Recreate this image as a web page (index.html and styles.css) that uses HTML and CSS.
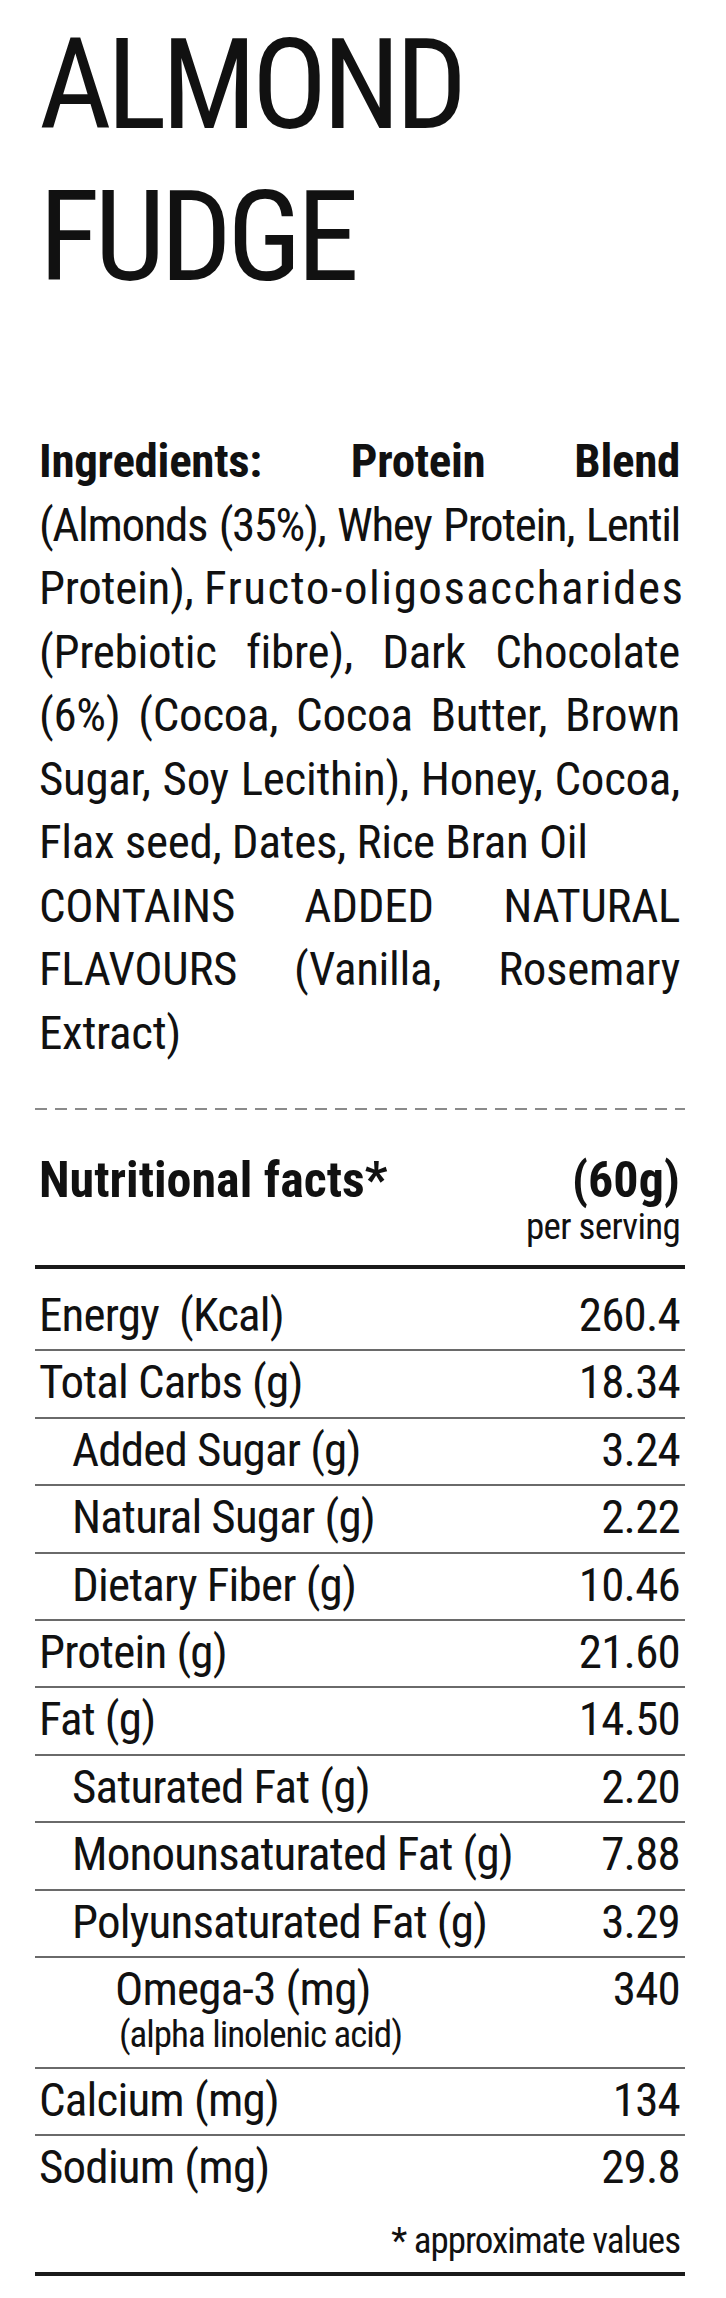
FILE: index.html
```html
<!DOCTYPE html>
<html lang="en">
<head>
<meta charset="utf-8">
<title>Almond Fudge – Nutrition Label</title>
<link rel="stylesheet" href="styles.css">
</head>
<body>
<main class="label">
  <h1 class="title">ALMOND<br>FUDGE</h1>

  <section class="ingredients">
    <span class="line bold">Ingredients: Protein Blend</span>
    <span class="line tight">(Almonds (35%), Whey Protein, Lentil</span>
    <span class="line">Protein), <span class="spread">Fructo-oligosaccharides</span></span>
    <span class="line">(Prebiotic fibre), Dark Chocolate</span>
    <span class="line">(6%) (Cocoa, Cocoa Butter, Brown</span>
    <span class="line">Sugar, Soy Lecithin), Honey, Cocoa,</span>
    <span class="line end">Flax seed, Dates, Rice Bran Oil</span>
    <span class="line">CONTAINS ADDED NATURAL</span>
    <span class="line">FLAVOURS (Vanilla, Rosemary</span>
    <span class="line end">Extract)</span>
  </section>

  <div class="dash" role="separator"></div>

  <header class="facts-head">
    <h2 class="facts-title">Nutritional facts*</h2>
    <div class="serving">
      <span class="serving-size">(60g)</span>
      <span class="serving-unit">per serving</span>
    </div>
  </header>

  <div class="facts">
    <div class="row first"><span class="name">Energy&nbsp; (Kcal)</span><span class="val">260.4</span></div>
    <div class="row"><span class="name">Total Carbs (g)</span><span class="val">18.34</span></div>
    <div class="row sub"><span class="name">Added Sugar (g)</span><span class="val">3.24</span></div>
    <div class="row sub"><span class="name">Natural Sugar (g)</span><span class="val">2.22</span></div>
    <div class="row sub"><span class="name">Dietary Fiber (g)</span><span class="val">10.46</span></div>
    <div class="row"><span class="name">Protein (g)</span><span class="val">21.60</span></div>
    <div class="row"><span class="name">Fat (g)</span><span class="val">14.50</span></div>
    <div class="row sub"><span class="name">Saturated Fat (g)</span><span class="val">2.20</span></div>
    <div class="row sub"><span class="name">Monounsaturated Fat (g)</span><span class="val">7.88</span></div>
    <div class="row sub"><span class="name">Polyunsaturated Fat (g)</span><span class="val">3.29</span></div>
    <div class="row subsub">
      <span class="name">Omega-3 (mg)<span class="note-sub">(alpha linolenic acid)</span></span>
      <span class="val">340</span>
    </div>
    <div class="row"><span class="name">Calcium (mg)</span><span class="val">134</span></div>
    <div class="row last"><span class="name">Sodium (mg)</span><span class="val">29.8</span></div>
  </div>

  <p class="footnote">* approximate values</p>
  <div class="thick-rule" role="separator"></div>
</main>
</body>
</html>
```

FILE: styles.css
```css
html, body {
  margin: 0;
  padding: 0;
  background: #ffffff;
}

body {
  color: #111111;
  font-family: "Roboto Condensed", Roboto, "Open Sans", sans-serif;
  font-stretch: 75%;
}

.label {
  margin-left: 35px;
  width: 650px;
  padding-bottom: 23px;
}

.title {
  margin: 9px 0 0;
  padding: 0 5px 0 4px;
  font-size: 126px;
  line-height: 152px;
  font-weight: 400;
  letter-spacing: -5px;
}

.ingredients {
  margin-top: 116px;
  padding: 0 5px 0 4px;
  font-size: 47px;
  line-height: 63.5px;
  letter-spacing: -0.3px;
}

.line {
  display: block;
  white-space: nowrap;
  text-align: justify;
  text-align-last: justify;
}

.line.end {
  text-align-last: left;
}

.line.tight {
  letter-spacing: -1.4px;
}

.bold {
  font-weight: 700;
}

.spread {
  letter-spacing: 1.5px;
}

.dash {
  margin-top: 44px;
  height: 2px;
  background-image: linear-gradient(to right, #8a8a8a 12px, transparent 12px);
  background-size: 20px 2px;
  background-repeat: repeat-x;
}

.facts-head {
  margin-top: 44px;
  padding: 0 5px 0 4px;
  display: flex;
  justify-content: space-between;
  align-items: flex-start;
}

.facts-title {
  margin: 0;
  font-size: 50px;
  line-height: 52px;
  font-weight: 700;
}

.serving {
  display: flex;
  flex-direction: column;
  align-items: flex-end;
}

.serving-size {
  font-size: 50px;
  line-height: 52px;
  font-weight: 700;
}

.serving-unit {
  font-size: 37px;
  line-height: 41px;
  letter-spacing: -0.7px;
}

.facts {
  margin-top: 18px;
  border-top: 4px solid #1a1a1a;
}

.row {
  display: flex;
  justify-content: space-between;
  align-items: flex-start;
  padding: 0 5px 3.5px 4px;
  border-bottom: 2px solid #6a6a6a;
  font-size: 47px;
  line-height: 61.9px;
  letter-spacing: -0.8px;
}

.row.first {
  padding-top: 15px;
}

.row.sub {
  padding-left: 37px;
}

.row.subsub {
  padding-left: 80px;
  padding-bottom: 17.7px;
  line-height: 62.5px;
}

.row.last {
  border-bottom: none;
}

.name {
  display: flex;
  flex-direction: column;
}

.note-sub {
  font-size: 37px;
  line-height: 28.8px;
  letter-spacing: -1px;
  padding-left: 4px;
}

.footnote {
  margin: 18px 0 11px;
  padding: 0 5px 0 4px;
  text-align: right;
  font-size: 37px;
  line-height: 41px;
  letter-spacing: -1px;
}

.thick-rule {
  height: 4px;
  background: #1a1a1a;
}
```
